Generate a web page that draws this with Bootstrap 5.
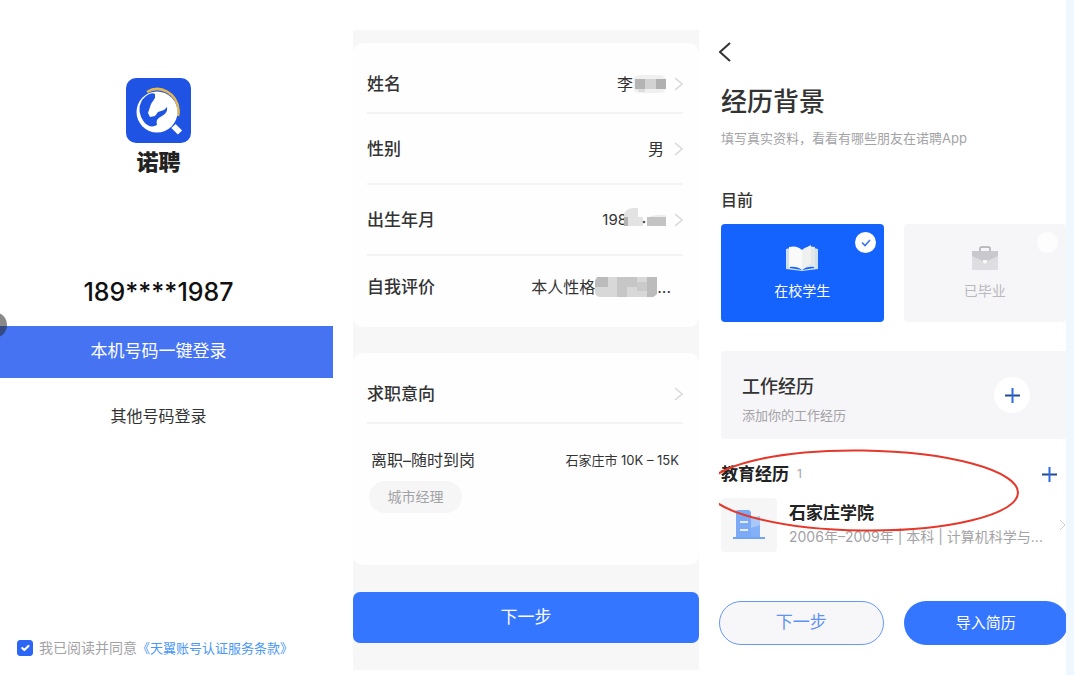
<!DOCTYPE html>
<html lang="zh-CN">
<head>
<meta charset="utf-8">
<meta name="viewport" content="width=device-width, initial-scale=1">
<title>诺聘</title>
<link href="https://cdn.jsdelivr.net/npm/bootstrap@5.3.0/dist/css/bootstrap.min.css" rel="stylesheet">
<script src="https://cdn.jsdelivr.net/npm/bootstrap@5.3.0/dist/js/bootstrap.bundle.min.js" defer></script>
<style>
  body { font-family: Inter, "Noto Sans CJK SC", sans-serif; color: #333; background: #fff; line-height: 24px; font-size: 16px; }
  a { color: inherit; text-decoration: none; }
  svg { display: block; flex: none; }
  .t12 { font-size: 12px; } .t13 { font-size: 13px; } .t14 { font-size: 14px; } .t15 { font-size: 15px; }
  .t16 { font-size: 16px; } .t17 { font-size: 17px; } .t18 { font-size: 18px; }
  .muted { color: #a3a3a6; }

  .login-pane { flex: 333 1 0; }
  .form-pane { flex: 346 1 0; margin: 30px 20px 0; }
  .exp-pane { flex: 347 1 0; padding-top: 30px; min-width: 0; }
  .edge { width: 8px; background: #eff7ff; z-index: 1; }

  /* login */
  .axis { padding-left: 0; padding-right: 16px; }
  .brand { padding-top: 78px; }
  .brand-name { font-size: 22px; font-weight: 900; line-height: 38px; color: #222; }
  .phone { font-size: 25px; font-weight: 500; line-height: 36px; color: #111; margin-top: 93px; }
  .btn-login { height: 52px; background: #4573f2; color: #fff; border: 0; border-radius: 0; }
  .btn-login:hover { background: #3a68e8; color: #fff; }
  .bubble { left: -19px; top: -14px; width: 26px; height: 26px; border-radius: 50%; background: rgba(40,40,40,.55); }
  .other { margin-top: 26px; }
  .agree { padding: 0 0 15px 17px; }
  .agree .form-check-input { width: 16px; height: 16px; margin: 0 6px 0 0; border-radius: 3px; flex: none; }
  .agree .form-check-input:checked { background-color: #2b66f6; border-color: #2b66f6; }
  .terms { color: #4a97f5; }

  /* profile form */
  .sheet { background: #f7f7f7; padding-top: 13px; padding-bottom: 27px; }
  .panel { background: #fefefe; border-radius: 10px; padding: 0 16px 0 14px; }
  .panel + .panel { margin-top: 26px; }
  .field { height: 71px; border-bottom: 2px solid #f3f3f4; }
  .field:first-child { padding-top: 12px; }
  .field.last-field { border-bottom: 0; padding-bottom: 9px; padding-right: 12px; }
  .field-label { font-weight: 500; }
  .chev { margin-left: 10px; }
  .intent { min-height: 212px; }
  .tag { width: 93px; height: 32px; line-height: 32px; border-radius: 16px; background: #f6f6f7; margin: 9px 0 0 2px; }
  .btn-next { height: 51px; border: 0; border-radius: 7px; background: #3476ff; color: #fff; margin-top: 27px; }
  .btn-next:hover { background: #2868f0; color: #fff; }

  /* experience */
  .inset { padding-left: 2px; }
  .page-title { font-size: 26px; line-height: 36px; font-weight: 500; margin: 22px 0 6px; }
  .now-title { line-height: 24px; font-weight: 500; margin: 38px 0 12px; }
  .two-up { display: grid; grid-template-columns: 1fr 1fr; gap: 20px; }
  .choice { height: 98px; border-radius: 4px; background: #f6f6f8; color: #b9b9bd; padding-top: 19px; cursor: pointer; }
  .choice.picked { background: #1463ff; color: #fff; }
  .choice span { padding-top: 6px; }
  .choice input { appearance: none; right: 8px; top: 8px; width: 21px; height: 21px; border-radius: 50%; background: #fdfdfd; margin: 0; }
  .choice input:checked { background: #fff url("data:image/svg+xml,%3Csvg xmlns='http://www.w3.org/2000/svg' viewBox='0 0 21 21'%3E%3Cpath d='M7 10.5l3 3 5-5.500' fill='none' stroke='%233b74ee' stroke-width='1.600'/%3E%3C/svg%3E"); }
  .work { height: 88px; border-radius: 4px 0 0 4px; background: #f6f5f8; padding: 0 36px 0 21px; margin-top: 29px; }
  .work-text { padding-top: 12px; line-height: 28px; }
  .work-text h2 { line-height: 28px; font-weight: 500; }
  .btn-bare { border: 0; padding: 0; background: none; }
  .round { width: 36px; height: 36px; border-radius: 50%; background: #fff; }
  .edu { height: 112px; }
  .edu-head { padding: 23px 9px 0 0; }
  .edu-title { font-weight: 700; line-height: 24px; color: #222; }
  .edu-icon { width: 56px; height: 54px; border-radius: 4px; background: #f6f6f7; }
  .ring-mark { left: -2px; top: 10px; }
  .actions { margin: 50px -2px 0 0; }
  .pill { height: 44px; border-radius: 22px; padding: 0; }
  .pill-line { background: #f7f7fa; border: 1px solid #6698f5; color: #5e93f5; }
  .pill-fill { background: #3476ff; border: 0; color: #fff; }
</style>
</head>
<body>
<main class="d-flex min-vh-100 overflow-hidden">

  <section class="login-pane d-flex flex-column">
    <div class="brand axis d-flex flex-column align-items-center">
      <svg width="65" height="65" viewBox="0 0 65 65" role="img" aria-label="诺聘">
        <rect width="65" height="65" rx="10" fill="#1f53e4"/>
        <path d="M21 14C34 6 51 15 52.500 32Q53 35 52 38" fill="none" stroke="#e5b84b" stroke-width="2.500"/>
        <circle cx="31" cy="34" r="20.500" fill="#fff"/>
        <path d="M20 18Q25 14 29 16L29 20L25 26L22 35L24 39L29 38L32 34L38 32L41 29Q42 35 36 38Q29 41 31 47Q24 51 18 44Q10 33 16 22Z" fill="#1f53e4"/>
        <path d="M47 52L52 46" stroke="#1f53e4" stroke-width="2"/>
        <path d="M47.500 48L54 54.500" stroke="#fff" stroke-width="6"/>
      </svg>
      <div class="brand-name">诺聘</div>
    </div>
    <div class="phone axis text-center">189****1987</div>
    <div class="position-relative mt-3">
      <button type="button" class="btn btn-login axis w-100 t17">本机号码一键登录</button>
      <span class="bubble position-absolute"></span>
    </div>
    <a href="#" class="other axis text-center t16">其他号码登录</a>
    <div class="agree d-flex align-items-center mt-auto">
      <input class="form-check-input" type="checkbox" id="agree" checked>
      <label for="agree" class="t14 muted">我已阅读并同意</label>
      <a href="#" class="terms t13">《天翼账号认证服务条款》</a>
    </div>
  </section>

  <section class="form-pane">
    <div class="sheet">
      <div class="panel">
        <a href="#" class="field d-flex align-items-center">
          <span class="field-label t17 me-auto">姓名</span><span class="t16">李</span>
          <svg width="33" height="20" viewBox="0 0 33 20"><rect y="1" width="33" height="18" rx="6" fill="#f0f0f0"/><path d="M2 5h10v10H2z" fill="#b4b4b4"/><path d="M12 5h11v10H12z" fill="#d2d2d2"/><path d="M23 5h10v10H23z" fill="#b0b0b0"/><path d="M4 15h8v3H6z" fill="#dedede"/></svg>
          <svg class="ms-2" width="9" height="14" viewBox="0 0 9 14"><path d="M1 1l7 6-7 6" fill="none" stroke="#d9d9dc" stroke-width="1.500"/></svg>
        </a>
        <a href="#" class="field d-flex align-items-center">
          <span class="field-label t17 me-auto">性别</span><span class="t16">男</span>
          <svg class="chev" width="9" height="14" viewBox="0 0 9 14"><path d="M1 1l7 6-7 6" fill="none" stroke="#d9d9dc" stroke-width="1.500"/></svg>
        </a>
        <a href="#" class="field d-flex align-items-center">
          <span class="field-label t17 me-auto">出生年月</span><span class="t15">198</span>
          <svg width="42" height="26" viewBox="0 0 42 26" style="margin-left:-3px"><path d="M0 9q0-7 8-8h6v9h5v9H0z" fill="#e3e3e3"/><path d="M0 10h4v9H0z" fill="#b2b2b2"/><circle cx="20" cy="15" r="1.300" fill="#555"/><path d="M23 12q4-5 19-4v5H23z" fill="#eee"/><path d="M23 10h19v9H23z" fill="#c3c3c3"/></svg>
          <svg class="ms-2" width="9" height="14" viewBox="0 0 9 14"><path d="M1 1l7 6-7 6" fill="none" stroke="#d9d9dc" stroke-width="1.500"/></svg>
        </a>
        <a href="#" class="field last-field d-flex align-items-center">
          <span class="field-label t17 me-auto">自我评价</span><span class="t16">本人性格</span>
          <svg width="62" height="20" viewBox="0 0 62 20"><rect width="62" height="20" rx="5" fill="#d8d8d8"/><path d="M2 0h11v10H0V4z" fill="#bbb"/><path d="M22 0h20v10H32v10H22z" fill="#c6c6c6"/><path d="M52 0h10v17l-4 3H52z" fill="#bcbcbc"/><path d="M42 5h10v9H42z" fill="#cacaca"/></svg>
          <span class="t16">...</span>
        </a>
      </div>
      <div class="panel intent">
        <a href="#" class="field d-flex align-items-center">
          <span class="field-label t17 me-auto">求职意向</span>
          <svg width="9" height="14" viewBox="0 0 9 14"><path d="M1 1l7 6-7 6" fill="none" stroke="#d9d9dc" stroke-width="1.500"/></svg>
        </a>
        <div class="d-flex align-items-center justify-content-between ps-1 pt-4">
          <span class="t16">离职–随时到岗</span><span class="t13 pe-1">石家庄市 10K – 15K</span>
        </div>
        <div class="tag t14 muted text-center">城市经理</div>
      </div>
      <button type="button" class="btn btn-next w-100 t17">下一步</button>
    </div>
  </section>

  <section class="exp-pane">
    <a href="#" aria-label="返回" class="d-block pt-2 mt-1"><svg width="12" height="20" viewBox="0 0 12 20"><path d="M11 1L1 10l10 9" fill="none" stroke="#333" stroke-width="2"/></svg></a>
    <div class="inset">
      <h1 class="page-title">经历背景</h1>
      <p class="t13 muted m-0">填写真实资料，看看有哪些朋友在诺聘App</p>
      <h2 class="now-title t16">目前</h2>
      <div class="two-up">
        <label class="choice picked position-relative d-flex flex-column align-items-center t14">
          <input type="radio" name="now" class="position-absolute" checked>
          <svg width="32" height="30" viewBox="0 0 32 30"><path d="M0 6l4-1v20l12 2v1L0 26zM32 6l-4-1v20l-12 2v1l16-2z" fill="#cfe0ee"/><path d="M3 4q8-2 13 3v20q-5-4-13-3z" fill="#fafafa"/><path d="M29 4q-8-2-13 3v20q5-4 13-3z" fill="#e3e8e8"/><path d="M16 7l9-5v18l-9 7z" fill="#eef1f0"/></svg>
          <span>在校学生</span>
        </label>
        <label class="choice position-relative d-flex flex-column align-items-center t14">
          <input type="radio" name="now" class="position-absolute">
          <svg width="28" height="30" viewBox="0 0 28 30"><rect x="1" y="8" width="26" height="19" rx="1" fill="#dedee2"/><path d="M9 8V5q0-1 2-1h6q2 0 2 1v3" fill="none" stroke="#aaa" stroke-width="1.500"/><path d="M1 8h26v5L14 19 1 13z" fill="#c8c8cd"/><path d="M12 17h4v2l-2 2-2-2z" fill="#fafafa"/></svg>
          <span>已毕业</span>
        </label>
      </div>
      <div class="work d-flex align-items-center justify-content-between">
        <div class="work-text">
          <h2 class="t18 m-0">工作经历</h2>
          <div class="t13 muted">添加你的工作经历</div>
        </div>
        <button type="button" aria-label="添加工作经历" class="btn-bare round d-flex align-items-center justify-content-center"><svg width="15" height="15" viewBox="0 0 15 15"><path d="M0 7.500h15" stroke="#234a91" stroke-width="2"/><path d="M7.500 0v15" stroke="#2d68e5" stroke-width="2"/></svg></button>
      </div>
      <div class="edu position-relative">
        <div class="edu-head d-flex align-items-center">
          <h2 class="edu-title t17 m-0">教育经历</h2><span class="t12 muted ms-2">1</span>
          <button type="button" aria-label="添加教育经历" class="btn-bare ms-auto"><svg width="15" height="15" viewBox="0 0 15 15"><path d="M0 7.500h15" stroke="#234a91" stroke-width="2"/><path d="M7.500 0v15" stroke="#2d68e5" stroke-width="2"/></svg></button>
        </div>
        <a href="#" class="d-flex align-items-center mt-2 pt-1">
          <span class="edu-icon d-flex align-items-center justify-content-center flex-shrink-0">
            <svg width="32" height="30" viewBox="0 0 32 30"><path d="M3 2q0-2 2-2h11l2 2v26H3z" fill="#7daaf5"/><path d="M18 8l9-2v22h-9z" fill="#a9c8fa"/><path d="M18 18l9-3v13h-9z" fill="#84b0f7"/><path d="M0 27h32v2H0z" fill="#71a3f5"/><path d="M7 12h8M7 20h8" stroke="#e4eeff" stroke-width="2"/></svg>
          </span>
          <span class="ms-2 ps-1 flex-grow-1">
            <span class="edu-title t17 d-block">石家庄学院</span>
            <span class="t14 muted d-block text-nowrap">2006年–2009年 | 本科 | 计算机科学与...</span>
          </span>
          <svg width="6" height="12" viewBox="0 0 6 12"><path d="M0 1l5 5-5 5" fill="none" stroke="#ccc"/></svg>
        </a>
        <svg class="ring-mark position-absolute" width="302" height="86" viewBox="0 0 302 86"><ellipse cx="143.500" cy="41.500" rx="155.500" ry="40" transform="rotate(.8 143.500 41.500)" fill="none" stroke="#e5382b" stroke-width="2"/></svg>
      </div>
    </div>
    <div class="two-up actions">
      <button type="button" class="btn pill pill-line t17">下一步</button>
      <button type="button" class="btn pill pill-fill t15">导入简历</button>
    </div>
  </section>

  <div class="edge"></div>
</main>
</body>
</html>
